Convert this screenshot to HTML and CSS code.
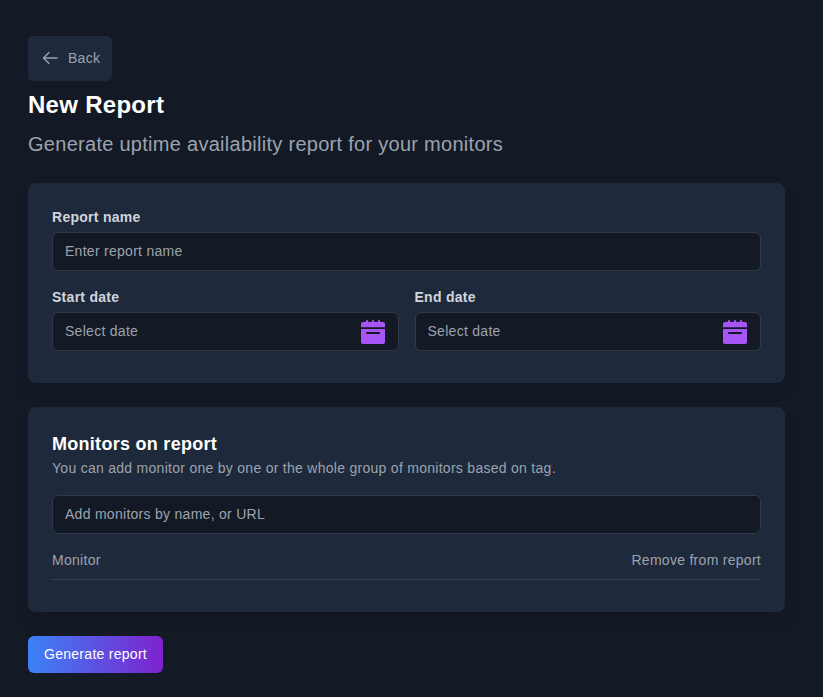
FILE: index.html
```html
<!DOCTYPE html>
<html lang="en">
  <head>
    <meta charset="UTF-8" />
    <meta name="viewport" content="width=device-width, initial-scale=1.0" />
    <title>New Report</title>
    <link rel="stylesheet" href="styles.css">
  </head>
  <body>
    <main class="page">
      <!-- Page Header -->
      <header class="page-header">
        <a class="back-link" href="#">
          <svg class="back-icon" viewBox="0 0 16 16" aria-hidden="true">
            <path d="M15 8H1.5M7 2.5L1.5 8L7 13.5" />
          </svg>
          Back
        </a>
        <h1>New Report</h1>
        <p class="subtitle">Generate uptime availability report for your monitors</p>
      </header>

      <form class="report-form">
        <!-- Report Details -->
        <section class="card">
          <div class="field">
            <label for="report-name">Report name</label>
            <input class="control" id="report-name" type="text" placeholder="Enter report name" />
          </div>
          <div class="date-row">
            <div class="field">
              <label for="start-date">Start date</label>
              <div class="control date-control">
                <input id="start-date" type="text" placeholder="Select date" />
                <button class="calendar-button" type="button" aria-label="Choose start date">
                  <svg viewBox="0 0 24 24" aria-hidden="true">
                    <path d="M0 7.300V4a2 2 0 0 1 2-2h2q1 0 1-1a1 1 0 0 1 2 0q0 1 1 1h2q1 0 1-1a1 1 0 0 1 2 0q0 1 1 1h2q1 0 1-1a1 1 0 0 1 2 0q0 1 1 1h2a2 2 0 0 1 2 2v3.300z" />
                    <path fill-rule="evenodd" d="M0 9h24v13a2 2 0 0 1-2 2H2a2 2 0 0 1-2-2zM6 12a1 1 0 0 0 0 2h12a1 1 0 0 0 0-2z" />
                  </svg>
                </button>
              </div>
            </div>
            <div class="field">
              <label for="end-date">End date</label>
              <div class="control date-control">
                <input id="end-date" type="text" placeholder="Select date" />
                <button class="calendar-button" type="button" aria-label="Choose end date">
                  <svg viewBox="0 0 24 24" aria-hidden="true">
                    <path d="M0 7.300V4a2 2 0 0 1 2-2h2q1 0 1-1a1 1 0 0 1 2 0q0 1 1 1h2q1 0 1-1a1 1 0 0 1 2 0q0 1 1 1h2q1 0 1-1a1 1 0 0 1 2 0q0 1 1 1h2a2 2 0 0 1 2 2v3.300z" />
                    <path fill-rule="evenodd" d="M0 9h24v13a2 2 0 0 1-2 2H2a2 2 0 0 1-2-2zM6 12a1 1 0 0 0 0 2h12a1 1 0 0 0 0-2z" />
                  </svg>
                </button>
              </div>
            </div>
          </div>
        </section>

        <!-- Monitors -->
        <section class="card">
          <h2><label for="monitor-search">Monitors on report</label></h2>
          <p class="hint">You can add monitor one by one or the whole group of monitors based on tag.</p>
          <input class="control" id="monitor-search" type="text" placeholder="Add monitors by name, or URL" />
          <table class="monitor-table">
            <thead>
              <tr>
                <th>Monitor</th>
                <th>Remove from report</th>
              </tr>
            </thead>
            <tbody></tbody>
          </table>
        </section>

        <button class="submit-button" type="submit">Generate report</button>
      </form>
    </main>
  </body>
</html>
```
FILE: styles.css
```css
* {
  box-sizing: border-box;
}
body {
  margin: 0;
  background-color: #131a25;
  color: #9ca3af;
  font-family: "Liberation Sans", Arial, sans-serif;
  font-size: 14px;
  line-height: 20px;
  letter-spacing: 0.02em;
}
h1,
h2,
p {
  margin: 0;
}
input,
button {
  font: inherit;
  letter-spacing: inherit;
}
.page {
  padding: 36px 38px 24px 28px;
}
.page-header {
  margin-bottom: 24px;
}
.back-link {
  display: inline-flex;
  align-items: center;
  gap: 10px;
  height: 45px;
  padding: 0 12px 2px 14px;
  border-radius: 5px;
  background-color: #1e293b;
  color: #9ca3af;
  text-decoration: none;
  vertical-align: top;
}
.back-icon {
  width: 16px;
  height: 16px;
  fill: none;
  stroke: currentColor;
  stroke-width: 1.4;
  stroke-linecap: round;
  stroke-linejoin: round;
}
h1 {
  margin: 8px 0;
  color: #ffffff;
  font-size: 24px;
  line-height: 32px;
}
.subtitle {
  font-size: 20px;
  line-height: 30px;
}
.report-form {
  display: flex;
  flex-direction: column;
  gap: 24px;
}
.card {
  padding: 24px 24px 32px;
  border-radius: 8px;
  background-color: #1e293b;
  box-shadow: 0 10px 15px -3px rgba(0, 0, 0, 0.1);
}
.field {
  display: flex;
  flex-direction: column;
  gap: 5px;
  min-width: 0;
}
.field label {
  color: #d1d5db;
  font-weight: bold;
}
.control {
  width: 100%;
  height: 39px;
  padding: 0 12px 2px;
  border: 1px solid #313946;
  border-radius: 6px;
  background-color: #131a25;
  color: #d1d5db;
}
.date-row {
  display: grid;
  grid-template-columns: 1fr 1fr;
  gap: 16px;
  margin-top: 16px;
}
.date-control {
  display: flex;
  align-items: center;
  padding: 0 13px 0 12px;
}
.date-control input {
  flex: 1;
  min-width: 0;
  padding: 0 0 2px;
  border: none;
  background: none;
  color: inherit;
}
input::placeholder {
  color: #9ca3af;
  opacity: 1;
}
.calendar-button {
  width: 24px;
  height: 24px;
  padding: 0;
  border: none;
  background: none;
  cursor: pointer;
}
.calendar-button svg {
  display: block;
  fill: #a855f7;
}
h2 {
  color: #ffffff;
  font-size: 18px;
  line-height: 26px;
}
.hint {
  margin-bottom: 16px;
  line-height: 22px;
}
.monitor-table {
  width: 100%;
  margin-top: 16px;
  border-collapse: collapse;
}
.monitor-table th {
  padding: 0 0 9px;
  border-bottom: 1px solid #374151;
  font-weight: normal;
  text-align: left;
}
.monitor-table th:last-child {
  text-align: right;
}
.submit-button {
  align-self: flex-start;
  height: 37px;
  padding: 0 16px 2px;
  border: none;
  border-radius: 6px;
  background: linear-gradient(to right, #3b82f6, #7e22ce);
  color: #ffffff;
  cursor: pointer;
}
.submit-button:hover {
  opacity: 0.9;
}
```
